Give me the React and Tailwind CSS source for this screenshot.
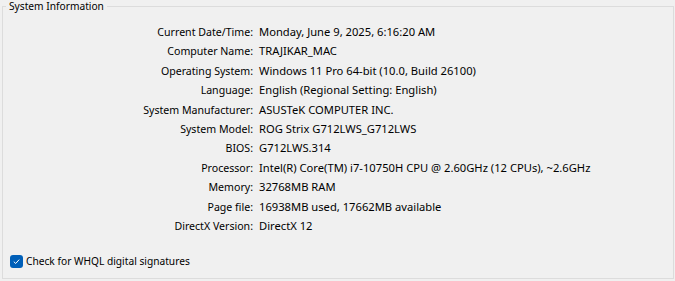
const rows = [
  ["Current Date/Time:", "Monday, June 9, 2025, 6:16:20 AM"],
  ["Computer Name:", "TRAJIKAR_MAC"],
  ["Operating System:", "Windows 11 Pro 64-bit (10.0, Build 26100)"],
  ["Language:", "English (Regional Setting: English)"],
  ["System Manufacturer:", "ASUSTeK COMPUTER INC."],
  ["System Model:", "ROG Strix G712LWS_G712LWS"],
  ["BIOS:", "G712LWS.314"],
  ["Processor:", "Intel(R) Core(TM) i7-10750H CPU @ 2.60GHz (12 CPUs), ~2.6GHz"],
  ["Memory:", "32768MB RAM"],
  ["Page file:", "16938MB used, 17662MB available"],
  ["DirectX Version:", "DirectX 12"],
];

export default function App() {
  return (
    <div className="w-[675px] h-[281px] bg-[#f0f0f0] pl-[2px] pr-[1px] pb-[2px] font-['Noto_Sans',sans-serif] text-[11.2px] text-black">
      <fieldset className="h-full border border-[#dcdcdc] px-0 pt-[9px] pb-0 m-0">
        <legend className="ml-[3px] px-[3px] leading-[13px] text-[10.2px]">System Information</legend>
        <div className="flex flex-col">
          {rows.map(([label, value]) => (
            <div key={label} className="flex h-[19.4px] items-baseline leading-[19.4px]">
              <span className="w-[250px] text-right whitespace-nowrap text-[10.6px]">{label}</span>
              <span className="ml-[6px] whitespace-nowrap">{value}</span>
            </div>
          ))}
        </div>
        <label className="mt-[19px] ml-[7px] flex items-center gap-[3px]">
          <span className="flex h-[13px] w-[13px] items-center justify-center rounded-[3px] bg-[#005fb8]">
            <svg viewBox="0 0 10 10" className="h-[9px] w-[9px]">
              <path d="M2 5.2 L4.1 7.2 L8 2.9" fill="none" stroke="white" strokeWidth="1.1" />
            </svg>
          </span>
          <span className="text-[10.2px]">Check for WHQL digital signatures</span>
        </label>
      </fieldset>
    </div>
  );
}
